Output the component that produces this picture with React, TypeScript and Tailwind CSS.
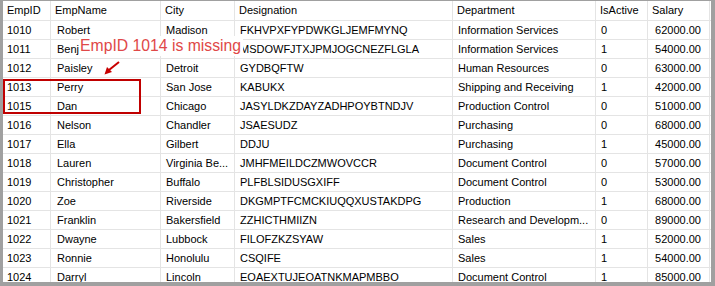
type Employee = {
  id: string;
  name: string;
  city: string;
  designation: string;
  department: string;
  isActive: string;
  salary: string;
};

const rows: Employee[] = [
  { id: "1010", name: "Robert", city: "Madison", designation: "FKHVPXFYPDWKGLJEMFMYNQ", department: "Information Services", isActive: "0", salary: "62000.00" },
  { id: "1011", name: "Benjamin", city: "", designation: "MSDOWFJTXJPMJOGCNEZFLGLA", department: "Information Services", isActive: "1", salary: "54000.00" },
  { id: "1012", name: "Paisley", city: "Detroit", designation: "GYDBQFTW", department: "Human Resources", isActive: "0", salary: "63000.00" },
  { id: "1013", name: "Perry", city: "San Jose", designation: "KABUKX", department: "Shipping and Receiving", isActive: "1", salary: "42000.00" },
  { id: "1015", name: "Dan", city: "Chicago", designation: "JASYLDKZDAYZADHPOYBTNDJV", department: "Production Control", isActive: "0", salary: "51000.00" },
  { id: "1016", name: "Nelson", city: "Chandler", designation: "JSAESUDZ", department: "Purchasing", isActive: "0", salary: "68000.00" },
  { id: "1017", name: "Ella", city: "Gilbert", designation: "DDJU", department: "Purchasing", isActive: "1", salary: "45000.00" },
  { id: "1018", name: "Lauren", city: "Virginia Be...", designation: "JMHFMEILDCZMWOVCCR", department: "Document Control", isActive: "0", salary: "57000.00" },
  { id: "1019", name: "Christopher", city: "Buffalo", designation: "PLFBLSIDUSGXIFF", department: "Document Control", isActive: "0", salary: "53000.00" },
  { id: "1020", name: "Zoe", city: "Riverside", designation: "DKGMPTFCMCKIUQQXUSTAKDPG", department: "Production", isActive: "1", salary: "68000.00" },
  { id: "1021", name: "Franklin", city: "Bakersfield", designation: "ZZHICTHMIIZN", department: "Research and Developm...", isActive: "0", salary: "89000.00" },
  { id: "1022", name: "Dwayne", city: "Lubbock", designation: "FILOFZKZSYAW", department: "Sales", isActive: "1", salary: "52000.00" },
  { id: "1023", name: "Ronnie", city: "Honolulu", designation: "CSQIFE", department: "Sales", isActive: "1", salary: "54000.00" },
  { id: "1024", name: "Darryl", city: "Lincoln", designation: "EOAEXTUJEOATNKMAPMBBO", department: "Document Control", isActive: "1", salary: "85000.00" },
];

const columns: { key: keyof Employee; label: string; width: string; data: string }[] = [
  { key: "id", label: "EmpID", width: "w-[48px]", data: "pl-[4px]" },
  { key: "name", label: "EmpName", width: "w-[110px]", data: "pl-[6px]" },
  { key: "city", label: "City", width: "w-[74px]", data: "pl-[5px]" },
  { key: "designation", label: "Designation", width: "w-[218px]", data: "pl-[5px]" },
  { key: "department", label: "Department", width: "w-[143px]", data: "pl-[5px]" },
  { key: "isActive", label: "IsActive", width: "w-[52px]", data: "pl-[5px]" },
  { key: "salary", label: "Salary", width: "w-[62px]", data: "pr-[8px] text-right" },
];

export default function App() {
  return (
    <div className="relative w-[715px] h-[286px] overflow-hidden bg-white border-t border-l-[3px] border-r-[4px] border-b-[4px] border-[#a0a0a0] font-['Liberation_Sans',Arial,sans-serif] text-[11px] text-black">
      {/* Header */}
      <div className="flex h-[20px] border-b border-[#e4e4e4]">
        {columns.map((c) => (
          <div
            key={c.key}
            className={`${c.width} shrink-0 border-r border-[#e4e4e4] pl-[4px] leading-[19px] whitespace-nowrap overflow-hidden`}
          >
            {c.label}
          </div>
        ))}
      </div>

      {/* Rows */}
      {rows.map((r) => (
        <div key={r.id} className="flex h-[19px] border-b border-[#e4e4e4]">
          {columns.map((c) => (
            <div
              key={c.key}
              className={`${c.width} ${c.data} shrink-0 border-r border-[#e4e4e4] leading-[18px] whitespace-nowrap overflow-hidden`}
            >
              {r[c.key]}
            </div>
          ))}
        </div>
      ))}

      {/* Annotation */}
      <div className="absolute left-[76px] top-[35px] h-[20px] bg-white pl-[1px] pr-[2px] text-[15.75px] leading-[20px] text-[#e04848]">
        EmpID 1014 is missing
      </div>
      <svg className="absolute left-[97px] top-[57px]" width="24" height="20" viewBox="0 0 24 20">
        <line x1="19" y1="4" x2="9" y2="12" stroke="#c80000" strokeWidth="2" />
        <polygon points="4.5,16.5 7,9 12,14" fill="#c80000" />
      </svg>
      <div className="absolute left-0 top-[78px] w-[138px] h-[35px] border-2 border-[#c00000]" />
    </div>
  );
}
